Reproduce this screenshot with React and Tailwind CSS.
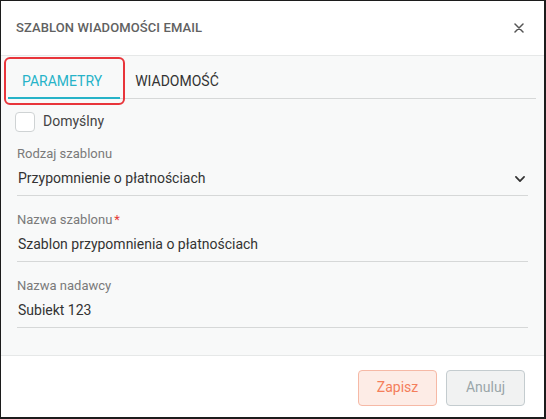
import React from "react";

const Field = ({ label, value, required, select, first }) => (
  <div className={first ? "pt-[14px]" : "pt-[16px]"}>
    <div className="text-[13px] leading-[16px] text-[#7a7a7a]">
      {label}
      {required ? <span className="text-[#e53935] ml-[2px]">*</span> : null}
    </div>
    <div className="flex items-center justify-between h-[34px] border-b border-[#d6d8d8] text-[14px] text-[#333]">
      <span className="pl-[1px]">{value}</span>
      {select ? (
        <svg width="14" height="14" viewBox="0 0 24 24" className="mr-[1px]">
          <path d="M5 8.5l7 7 7-7" fill="none" stroke="#333" strokeWidth="3" strokeLinecap="round" strokeLinejoin="round" />
        </svg>
      ) : null}
    </div>
  </div>
);

export default function App() {
  return (
    <div
      className="w-[546px] h-[419px] flex flex-col bg-white border-t border-l border-r-2 border-b-2 border-[#1c1c1c] overflow-hidden"
      style={{ fontFamily: "Roboto, 'Liberation Sans', sans-serif" }}
    >
      {/* header */}
      <div className="h-[55px] shrink-0 flex items-center justify-between pl-[15px] pr-[20px] border-b border-[#e6e8e8]">
        <h2 className="text-[13px] font-medium tracking-[0.1px] text-[#616161]">SZABLON WIADOMOŚCI EMAIL</h2>
        <svg width="10" height="10" viewBox="0 0 10 10">
          <path d="M1 1l8 8M9 1l-8 8" stroke="#555" strokeWidth="1.5" strokeLinecap="round" />
        </svg>
      </div>

      {/* body */}
      <div className="flex-1 bg-[#f8f9f9] px-[16px] border-b border-[#e6e8e8]">
        <div className="relative flex items-end h-[43px] border-b border-[#d6d8d8] ml-[-9px] mr-[-8px]">
          <div className="relative pl-[14px] pr-[18px] pb-[9px] text-[14px] leading-[16px] text-[#26b3c8]">
            PARAMETRY
            <div className="absolute left-0 right-0 bottom-[-1px] h-[2px] bg-[#26b3c8]" />
          </div>
          <div className="pl-[15px] pb-[9px] text-[14px] leading-[16px] text-[#333]">WIADOMOŚĆ</div>
          <div className="absolute left-[-4px] top-[1px] w-[121px] h-[48px] border-2 border-[#e8353b] rounded-[6px] pointer-events-none" />
        </div>

        <label className="flex items-center gap-[8px] mt-[12px] -ml-[2px]">
          <span className="w-[20px] h-[20px] rounded-[4px] border border-[#cfd3d4] bg-white" />
          <span className="text-[14px] text-[#444]">Domyślny</span>
        </label>

        <Field first label="Rodzaj szablonu" value="Przypomnienie o płatnościach" select />
        <Field label="Nazwa szablonu" value="Szablon przypomnienia o płatnościach" required />
        <Field label="Nazwa nadawcy" value="Subiekt 123" />
      </div>

      {/* footer */}
      <div className="h-[61px] shrink-0 flex items-center justify-end gap-[9px] pr-[19px] pt-[2px]">
        <button className="w-[79px] h-[36px] rounded-[4px] border border-[#f6b9a6] bg-[#fdece6] text-[14px] text-[#f47e5b]">
          Zapisz
        </button>
        <button className="w-[79px] h-[36px] rounded-[4px] border border-[#c4cccf] bg-[#f1f2f2] text-[14px] text-[#9aa6a9]">
          Anuluj
        </button>
      </div>
    </div>
  );
}
